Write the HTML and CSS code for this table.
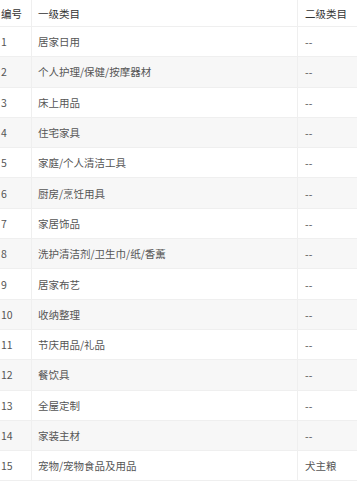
FILE: index.html
```html
<!DOCTYPE html>
<html lang="zh">
<head>
<meta charset="utf-8">
<link rel="stylesheet" href="styles.css">
</head>
<body>
<div class="table">
  <div class="row head"><div class="c1">编号</div><div class="c2">一级类目</div><div class="c3">二级类目</div></div>
  <div class="row"><div class="c1">1</div><div class="c2">居家日用</div><div class="c3">--</div></div>
  <div class="row"><div class="c1">2</div><div class="c2">个人护理/保健/按摩器材</div><div class="c3">--</div></div>
  <div class="row"><div class="c1">3</div><div class="c2">床上用品</div><div class="c3">--</div></div>
  <div class="row"><div class="c1">4</div><div class="c2">住宅家具</div><div class="c3">--</div></div>
  <div class="row"><div class="c1">5</div><div class="c2">家庭/个人清洁工具</div><div class="c3">--</div></div>
  <div class="row"><div class="c1">6</div><div class="c2">厨房/烹饪用具</div><div class="c3">--</div></div>
  <div class="row"><div class="c1">7</div><div class="c2">家居饰品</div><div class="c3">--</div></div>
  <div class="row"><div class="c1">8</div><div class="c2">洗护清洁剂/卫生巾/纸/香薰</div><div class="c3">--</div></div>
  <div class="row"><div class="c1">9</div><div class="c2">居家布艺</div><div class="c3">--</div></div>
  <div class="row"><div class="c1">10</div><div class="c2">收纳整理</div><div class="c3">--</div></div>
  <div class="row"><div class="c1">11</div><div class="c2">节庆用品/礼品</div><div class="c3">--</div></div>
  <div class="row"><div class="c1">12</div><div class="c2">餐饮具</div><div class="c3">--</div></div>
  <div class="row"><div class="c1">13</div><div class="c2">全屋定制</div><div class="c3">--</div></div>
  <div class="row"><div class="c1">14</div><div class="c2">家装主材</div><div class="c3">--</div></div>
  <div class="row"><div class="c1">15</div><div class="c2">宠物/宠物食品及用品</div><div class="c3">犬主粮</div></div>
</div>
</body>
</html>
```

FILE: styles.css
```css
html, body {
  margin: 0;
  padding: 0;
  background: #fff;
}
body {
  font-family: "Noto Sans CJK SC", "Noto Sans", sans-serif;
  font-size: 10.5px;
  color: #555;
}
.table {
  display: flex;
  flex-direction: column;
  width: 357px;
}
.row {
  display: grid;
  grid-template-columns: 32px 266px 1fr;
  height: 30.3px;
  box-sizing: border-box;
  border-bottom: 1px solid #efefef;
}
.row:nth-child(odd) {
  background: #f7f7f7;
}
.row.head {
  height: 27px;
  background: #fff;
  color: #333;
}
.row > div {
  display: flex;
  align-items: center;
  white-space: nowrap;
}
.c1 {
  padding-left: 1px;
  border-right: 1px solid #efefef;
}
.c2 {
  padding-left: 6px;
  border-right: 1px solid #efefef;
}
.c3 {
  padding-left: 7px;
}
```
